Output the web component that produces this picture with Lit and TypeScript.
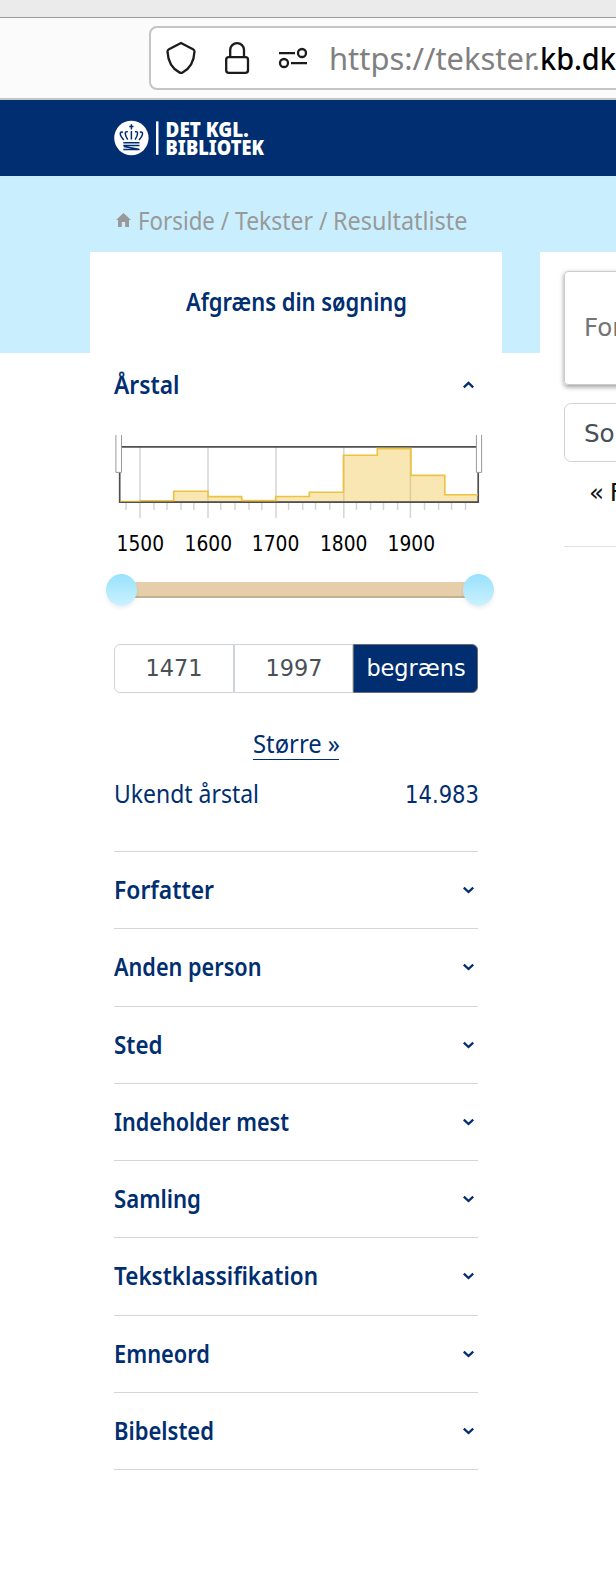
import { LitElement, html, svg, css } from "lit";
import { customElement, property } from "lit/decorators.js";

const facets: Array<[string, number]> = [
  ["Forfatter", 100],
  ["Anden person", 147.5],
  ["Sted", 48.5],
  ["Indeholder mest", 175],
  ["Samling", 87],
  ["Tekstklassifikation", 204],
  ["Emneord", 96],
  ["Bibelsted", 100],
];

const crumbs: Array<[string, number]> = [["Forside /", 91], ["Tekster /", 92.5], ["Resultatliste", 134.5]];

const years: Array<[number, number]> = [[1500, 140], [1600, 208], [1700, 275.2], [1800, 343.4], [1900, 411]];
const gridX = [140, 208, 276, 343.8, 410.4];
const tickX = [126, 154, 167, 181, 193.8, 220.7, 235, 249, 261.8, 288.6, 302.7, 315.5, 329.7, 356.5, 370.6, 383.5, 397.6, 424.5, 438.6, 451.5, 465.5];
const histogram =
  "M120 501.6H140V500.8H173.7V491.2H208V496.6H241.7V500.6H275.7V496.5H309.3V492.2H343.4V455.2H377.3V448.6H411V475.4H444.8V494.8H478";

@customElement("fit-text")
export class FitText extends LitElement {
  @property() text = "";
  @property({ type: Number }) measure = 0;
  @property({ type: Number }) baseline = 24;

  static styles = css`
    :host { display: block; flex: none; }
    svg { display: block; overflow: visible; fill: currentColor; }
  `;

  render() {
    return html`<svg width=${this.measure} height="32">
      <text x="0" y=${this.baseline} textLength=${this.measure} lengthAdjust="spacingAndGlyphs">${this.text}</text>
    </svg>`;
  }
}

@customElement("app-root")
export class AppRoot extends LitElement {
  static styles = css`
    :host { display: block; width: 616px; height: 1583px; overflow: hidden; background: #fff; color: #002e70; font: 24.5px "Noto Sans", sans-serif; }
    * { box-sizing: border-box; }
    svg { display: block; flex: none; }
    .tabs { height: 18px; background: #ebebeb; border-bottom: 1px solid #9b9b9b; }
    .toolbar { height: 82px; background: #fbfbfb; border-bottom: 2px solid #c5c5c5; padding: 8px 0 0 149px; }
    .url { width: 560px; height: 64px; background: #fff; border: 2px solid #c4c4c4; border-radius: 8px; display: flex; align-items: center; padding-left: 14px; }
    .address { display: flex; margin-left: 20px; font: 31.5px "Noto Sans", sans-serif; color: #808080; }
    .domain { color: #000; font-weight: 500; }
    .brand { height: 76px; background: #002e70; padding: 21px 0 0 114px; }
    .brand svg { overflow: visible; fill: #fff; font: 900 21.6px "Noto Sans", sans-serif; }
    .hero { height: 177px; background: #c9effe; padding: 30px 0 0 116px; }
    .crumbs { display: flex; gap: 5.5px; color: #999; }
    .crumbs svg { margin: 7px 1.5px 0 0; }
    .columns { display: flex; gap: 38px; padding-left: 90px; margin-top: -101px; height: 1331px; }
    .panel { width: 412px; flex: none; background: #fff; padding: 0 24px; }
    .title { height: 101px; padding: 35px 0 0 72px; font-weight: 600; }
    .head { display: flex; justify-content: space-between; font-weight: 600; }
    .year-head { height: 82px; padding-top: 17px; }
    .chev { margin-right: 4px; }
    .year-head .chev { margin-top: 11px; }
    .chart { overflow: visible; font: 20.5px "DejaVu Sans Condensed", "DejaVu Sans", sans-serif; }
    .slider { height: 32px; margin: 12px -16px 0 -8px; display: flex; align-items: center; }
    .thumb { width: 31px; height: 32px; flex: none; border-radius: 50%; background: linear-gradient(#98e1fc, #cbf1ff); box-shadow: 0 2px 4px rgba(0,0,0,.08); z-index: 1; }
    .track { height: 16px; flex: 1; margin: 0 -6px; background: #e6ceab; border-bottom: 2px solid #c4b190; }
    .range { display: flex; height: 49px; margin-top: 38px; font: 22.4px "DejaVu Sans", sans-serif; line-height: 47px; text-align: center; color: #495057; }
    .field { border: 1px solid #ced4da; width: 120px; }
    .field:first-child { border-radius: 6px 0 0 6px; }
    .field + .field { width: 119px; padding-left: 1px; }
    .submit { flex: 1; padding-left: 1px; background: #002e70; border: 1px solid #6c6c70; border-radius: 0 6px 6px 0; color: #fff; }
    .more { width: 86px; height: 32px; margin: 35px 0 0 139px; border-bottom: 1px solid #002e70; }
    .unknown { display: flex; justify-content: space-between; height: 91px; padding-top: 19px; }
    .figure { margin-right: -1px; font: 24px "DejaVu Sans Condensed", "DejaVu Sans", sans-serif; }
    .facet { border-top: 1px solid #d3d4d5; height: 77.25px; padding-top: 22px; }
    .facet .chev { margin-top: 12px; }
    .last { border-top: 1px solid #d3d4d5; }
    .results { flex: none; width: 300px; background: #fff; padding: 19px 0 0 24px; font: 24.6px "DejaVu Sans", sans-serif; }
    .search { height: 114px; border: 1px solid #ccc; border-radius: 4px; box-shadow: 0 2px 5px rgba(0,0,0,.4); padding-left: 19px; line-height: 111px; color: #757575; }
    .sort { height: 59px; border: 1px solid #ced4da; border-radius: 7px; margin-top: 18px; padding-left: 19px; line-height: 59px; color: #495057; }
    .pager { height: 85px; padding: 16px 0 0 25px; color: #111; border-bottom: 1px solid #dee2e6; white-space: nowrap; word-spacing: -2px; }
  `;

  private chevron(up = false) {
    return html`<svg class="chev" width="11" height="8" viewBox="0 0 11 8" fill="none" stroke="#002e70" stroke-width="2.3">
      <path d=${up ? "M.8 6.4 5.5 1.9 10.2 6.4" : "M.8 1.6 5.5 6 10.2 1.6"} />
    </svg>`;
  }

  private chart() {
    return html`<svg class="chart" width="364" height="127" viewBox="114 435 364 127">
      <g stroke="#d4d4d4" stroke-width="1.5">
        ${gridX.map((x) => svg`<path d="M${x} 447V518" />`)}
        ${tickX.map((x) => svg`<path d="M${x} 503V510" />`)}
      </g>
      <path d="${histogram}V502H120Z" fill="#edc240" fill-opacity=".4" />
      <path d="M119.7 446.8H478.2V502.2H119.7Z" fill="none" stroke="#505050" stroke-width="1.7" />
      <path d=${histogram} fill="none" stroke="#edc240" stroke-width="1.6" />
      <path d="M119 502.4H479" stroke="#505050" stroke-width="1.3" />
      <g fill="#fff" stroke="#999" stroke-width="1">
        <path d="M115.9 435V472.4H121.5V435" /><path d="M476.4 435V472.4H481.6V435" />
      </g>
      <g fill="#000">
        ${years.map(([y, x]) => svg`<text x=${x - 23.4} y="551" textLength="47.5" lengthAdjust="spacingAndGlyphs">${y}</text>`)}
      </g>
    </svg>`;
  }

  render() {
    return html`
      <div class="tabs"></div>
      <div class="toolbar">
        <div class="url">
          <svg width="144" height="36" viewBox="165 40 144 36" fill="none" stroke="#1b1b1b" stroke-width="2.3" stroke-linejoin="round">
            <path d="M181 43 193 49.2Q194.6 50 194.5 51.6C194 61 190 68.5 182.6 72.4Q181 73.2 179.4 72.4C172 68.5 168 61 167.5 51.6Q167.4 50 169 49.2Z" />
            <rect x="226.2" y="57.2" width="21.8" height="15.6" rx="2.6" />
            <path d="M230.2 57V50A6.9 6.9 0 0 1 244 50V57" />
            <circle cx="302" cy="53" r="4" /><circle cx="284" cy="63" r="4" />
            <path d="M279 53.2H295M291 63.2H307" />
          </svg>
          <div class="address">
            <fit-text text="https://tekster." measure="211" baseline="27.5"></fit-text>
            <fit-text class="domain" text="kb.dk/" measure="87" baseline="27.5"></fit-text>
          </div>
        </div>
      </div>
      <div class="brand">
        <svg width="152" height="36" viewBox="114 121 152 36">
          <circle cx="131.4" cy="138" r="17.2" />
          <g fill="none" stroke="#002e70" stroke-width="1.5">
            <path d="M131.4 124.3V129.5M129.3 126.4H133.5M131.4 131V139.5" />
            <path d="M123.8 140C119 134.5 119.5 131.2 123 132.2M127.7 139.7C124.4 134.5 124.5 131 127.8 131.8M139 140C143.8 134.5 143.3 131.2 139.8 132.2M135.1 139.7C138.4 134.5 138.3 131 135 131.8" />
            <path d="M123.3 142.8H139.5M123.3 145.6H139.5M123.8 146.4 138.8 149.2M123.3 149.4H139.5" />
          </g>
          <rect x="156" y="121.4" width="2.5" height="33.4" />
          <text x="165.6" y="137" textLength="83" lengthAdjust="spacingAndGlyphs">DET KGL.</text>
          <text x="165.6" y="154.6" textLength="98.4" lengthAdjust="spacingAndGlyphs">BIBLIOTEK</text>
        </svg>
      </div>
      <div class="hero">
        <div class="crumbs">
          <svg width="15" height="14" viewBox="0 0 15 14" fill="#999"><path d="M7.5 0 15 7H13V14H9.2V9H5.8V14H2V7H0Z" /></svg>
          ${crumbs.map(([name, width]) => html`<fit-text .text=${name} .measure=${width} .baseline=${24}></fit-text>`)}
        </div>
      </div>
      <div class="columns">
        <div class="panel">
          <div class="title"><fit-text text="Afgræns din søgning" measure="221" baseline="23.5"></fit-text></div>
          <div class="head year-head"><fit-text text="Årstal" measure="65.5" baseline="23.5"></fit-text>${this.chevron(true)}</div>
          ${this.chart()}
          <div class="slider"><div class="thumb"></div><div class="track"></div><div class="thumb"></div></div>
          <div class="range"><div class="field">1471</div><div class="field">1997</div><div class="submit">begræns</div></div>
          <div class="more"><fit-text text="Større »" measure="87" baseline="24.5"></fit-text></div>
          <div class="unknown">
            <fit-text text="Ukendt årstal" measure="145" baseline="24"></fit-text>
            <fit-text class="figure" text="14.983" measure="74" baseline="24"></fit-text>
          </div>
          ${facets.map(([name, width]) => html`<div class="head facet">
            <fit-text .text=${name} .measure=${width} .baseline=${25}></fit-text>${this.chevron()}
          </div>`)}
          <div class="last"></div>
        </div>
        <div class="results">
          <div class="search">Forfatter</div>
          <div class="sort">Sortér</div>
          <div class="pager">« Forrige</div>
        </div>
      </div>
    `;
  }
}
